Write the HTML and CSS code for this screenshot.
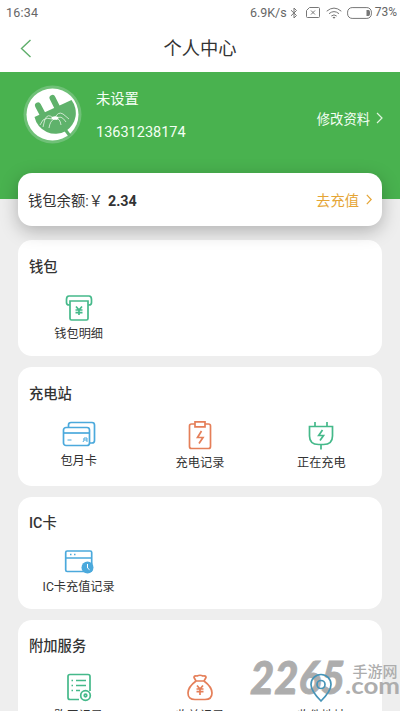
FILE: index.html
```html
<!DOCTYPE html>
<html lang="zh-CN">
<head>
<meta charset="utf-8">
<meta name="viewport" content="width=device-width, initial-scale=1">
<title>个人中心</title>
<link rel="stylesheet" href="styles.css">
</head>
<body>
<div class="screen">
  <div class="status">
    <span class="time">16:34</span>
    <span class="speed">6.9K/s</span>
    <svg class="bt" width="8" height="12" viewBox="0 0 8 12"><path d="M1 3.2 6.5 8.5 4 11V1l2.500 2.500L1 8.800"/></svg>
    <svg class="sim" width="14" height="11" viewBox="0 0 14 11"><path d="M3.500.500h9q1 0 1 1v8q0 1-1 1h-11q-1 0-1-1v-6zM5 3.500l4 4M9 3.500l-4 4"/></svg>
    <svg class="wifi" width="16" height="12" viewBox="0 0 16 12"><path d="M.7 4.200Q8-2 15.300 4.200M3 6.700q5-4.200 10 0M5.300 9q2.700-2.200 5.400 0"/><path class="dot" d="M6.500 10.200q1.500-1 3 0L8 11.800z"/></svg>
    <svg class="batt" width="25" height="12" viewBox="0 0 25 12"><rect x=".6" y=".6" width="23.800" height="10.800" rx="4.500"/><path class="dot" d="M19.500 3h2q1.500 0 1.500 3t-1.500 3h-2z"/></svg>
    <span class="pct">73%</span>
  </div>
  <header class="nav">
    <svg class="back" width="12" height="19" viewBox="0 0 12 19"><path d="M10.500 1 1.500 9.500l9 8.500"/></svg>
    <h1>个人中心</h1>
  </header>
  <section class="profile">
    <svg class="avatar" width="60" height="60" viewBox="0 0 60 60">
      <circle cx="29.500" cy="29.500" r="29" fill="#6fc077"/>
      <circle cx="29.500" cy="29.500" r="26" fill="#fff"/>
      <path d="M11.500 32 48.500 15A21.500 21.500 0 0 1 43 46 21.500 21.500 0 0 1 11.500 32z" fill="#5fb26b"/>
      <path d="m20 30-5-9.500M34.500 23 29.500 13" stroke="#5fb26b" stroke-width="6" stroke-linecap="round"/>
      <path d="m41 43 6 8" stroke="#5fb26b" stroke-width="3"/>
      <g fill="none" stroke="#e4f3e5" stroke-width=".8"><path d="M30 33q-5-5-8 1l-2 8M29 34q-5-2-9 1l-3 5M31 34q-4 2-5 9M32 33q3-7 8-4l6 5M33 34q5-5 10 3M33 34q4-1 5 6"/></g>
      <ellipse cx="32" cy="33" rx="3.500" ry="1.800" fill="#fff"/>
    </svg>
    <div class="who"><div class="name">未设置</div><div class="phone">13631238174</div></div>
    <div class="edit">修改资料<svg width="7" height="12" viewBox="0 0 7 12"><path d="m1 1 5 5-5 5"/></svg></div>
  </section>
  <main>
    <section class="balance">
      <div>钱包余额:￥<b>2.34</b></div>
      <div class="topup">去充值<svg width="6" height="11" viewBox="0 0 6 11"><path d="m.8.800 4.400 4.700-4.400 4.700"/></svg></div>
    </section>
    <section class="card wallet">
      <h2>钱包</h2>
      <div class="grid">
        <div class="item"><svg class="green" width="28" height="28" viewBox="0 0 28 28"><path d="M5 11H4q-2.500 0-2.500-2.500v-3Q1.500 2 4 2h20q2.500 0 2.500 3.500v3Q26.500 11 24 11h-1M5 7h18v17.500q0 1.500-1.500 1.500h-15Q5 26 5 24.500zM11 12.500l3 3.500 3-3.500M10.500 16h7M10.500 18.700h7M14 16v5"/></svg><span>钱包明细</span></div>
      </div>
    </section>
    <section class="card station">
      <h2>充电站</h2>
      <div class="grid">
        <div class="item"><svg class="blue" width="34" height="27" viewBox="0 0 34 27"><path d="M6.500 6V4Q6.500 1.500 9 1.500h21q2.500 0 2.500 2.500v15.500q0 2.500-2.500 2.500h-2.500"/><rect x="1.500" y="6.500" width="26" height="18" rx="2.500"/><path d="M1.500 12h26"/><path class="thin" d="M5.500 19h4M21 21q1-1 1-4h3v4M22 19h3"/></svg><span>包月卡</span></div>
        <div class="item"><svg class="orange" width="28" height="29" viewBox="0 0 28 29"><path d="M9 3H5.500Q3.500 3 3.500 5v20.500q0 2 2 2h17q2 0 2-2V5q0-2-2-2H19M9 .8h10v5H9zM15.500 10l-4 6.500h5.500L13 22.500"/></svg><span>充电记录</span></div>
        <div class="item"><svg class="green" width="28" height="29" viewBox="0 0 28 29"><path d="M2.500 5.500h23V15q0 8.500-9 8.500h-5q-9 0-9-8.500zM8 1v4.500M20 1v4.500M14 23.500v5M15.500 9l-3.800 5.500h4.800L13 19.500"/></svg><span>正在充电</span></div>
      </div>
    </section>
    <section class="card ic">
      <h2>IC卡</h2>
      <div class="grid">
        <div class="item"><svg class="blue" width="30" height="25" viewBox="0 0 30 25"><rect x="1.700" y="1" width="26" height="20.500" rx="1.500"/><path d="M1.700 8h26M6 4.500h1.500M10 4.500h1.500"/><circle class="clock" cx="23.500" cy="17.500" r="6"/><path class="hand" d="M23.500 14v4l2 1.700"/></svg><span>IC卡充值记录</span></div>
      </div>
    </section>
    <section class="card extra">
      <h2>附加服务</h2>
      <div class="grid">
        <div class="item"><svg class="green" width="28" height="30" viewBox="0 0 28 30"><path d="M14 26.500H5q-2 0-2-2v-21q0-2 2-2h18q2 0 2 2V18M11 7.500h10M11 12.500h10M11 17.500h4M6.500 7.500H8M6.500 12.500H8M6.500 17.500H8"/><circle cx="20.500" cy="22.500" r="4.800"/><circle cx="20.500" cy="22.500" r="1.300"/></svg><span>购买记录</span></div>
        <div class="item"><svg class="orange" width="28" height="30" viewBox="0 0 28 30"><path d="M10 8 8 4.500Q8 2.500 11 3q3-1.500 6 0 3-.500 3 1.500L18 8M10 8h8q8 6 8 12 0 6.500-7 6.500H9Q2 26.500 2 20q0-6 8-12zM11 12.500l3 3.500 3-3.500M10.500 16h7M10.500 18.700h7M14 16v6"/></svg><span>收益记录</span></div>
        <div class="item pin"><svg width="28" height="30" viewBox="0 0 28 30"><path d="M14 28Q4 18 4 11.500a10 10 0 0 1 20 0Q24 18 14 28z"/><circle cx="14" cy="11.500" r="4"/></svg><span>收件地址</span></div>
      </div>
    </section>
  </main>
  <svg class="mark" width="152" height="40" viewBox="0 0 152 40">
    <text class="big" x="1" y="34" textLength="95" lengthAdjust="spacingAndGlyphs">2265</text>
    <text class="cn" x="103.500" y="17" textLength="45" lengthAdjust="spacingAndGlyphs">手游网</text>
    <text class="com" x="96" y="34" textLength="55" lengthAdjust="spacingAndGlyphs">.com</text>
  </svg>
</div>
</body>
</html>
```
FILE: styles.css
```css
* { box-sizing: border-box; }
body { margin: 0; background: #eee; color: #333; font-family: Roboto, "Noto Sans CJK SC", sans-serif; }
h1, h2 { margin: 0; }
svg { display: block; flex: none; fill: none; }
.screen { position: relative; height: 711px; overflow: hidden; }

.status { display: flex; align-items: center; height: 25px; padding: 0 3px 0 6px; background: #fff; color: #666; font-size: 12.500px; line-height: 25px; }
.status svg { stroke: #777; stroke-width: 1; }
.status .dot { fill: #777; stroke: none; }
.time { letter-spacing: .2px; }
.speed { margin-left: auto; }
.bt { margin-left: 3px; }
.sim { margin-left: 8px; }
.wifi { margin-left: 6px; }
.batt { margin-left: 5px; }
.pct { margin-left: 3px; font-size: 12px; }

.nav { display: flex; align-items: center; height: 47px; padding: 0 20px; background: #fff; }
.nav h1 { flex: 1; margin-right: 12px; font-size: 18.300px; font-weight: 400; line-height: 49px; text-align: center; }
.back { stroke: #5fae6b; stroke-width: 1.400; }

.profile { display: flex; height: 127px; padding: 13px 17px 0 23px; background: #49b24f; color: #f4fff4; }
.who { margin: 4px 0 0 13px; }
.name { font-size: 14.300px; line-height: 20px; }
.phone { margin-top: 14px; font-size: 14.500px; line-height: 20px; }
.edit { display: flex; align-items: center; gap: 6px; height: 20px; margin: 23px 0 0 auto; font-size: 13.300px; }
.edit svg { stroke: #dff5df; stroke-width: 1.200; }

main { padding: 0 18px; margin-top: -26px; }
.balance { display: flex; align-items: center; justify-content: space-between; height: 53px; padding: 0 10px; border-radius: 14px; background: #fff; box-shadow: 0 5px 18px rgba(0, 0, 0, .26); font-size: 14.300px; position: relative; }
.balance b { margin-left: 5px; font-weight: 700; }
.topup { display: flex; align-items: center; gap: 7px; color: #e5a535; }
.topup svg { stroke: #e5a535; stroke-width: 1.200; }

.card { border-radius: 14px; background: #fff; margin-bottom: 11px; padding-top: 17px; }
.card h2 { padding-left: 11px; font-size: 14.300px; font-weight: 500; line-height: 20px; }
.wallet { height: 116px; margin-top: 14px; }
.station { height: 119px; }
.ic { height: 112px; padding-top: 16px; }
.extra { height: 130px; padding-top: 16px; }
.grid { display: grid; grid-template-columns: repeat(3, 1fr); margin-top: 17px; }
.item { display: flex; flex-direction: column; align-items: center; font-size: 12.200px; line-height: 18px; }
.item svg { stroke-width: 1.700; }
.item span { margin-top: 3px; }
.station .item span { margin-top: 4px; }
.extra .item span { margin-top: 4px; }
.green { stroke: #45b98a; }
.blue { stroke: #4ba9dc; }
.orange { stroke: #e57f59; }
.item .thin { stroke-width: 1; }
.clock { fill: #4ba9dc; stroke: none; }
.hand { stroke: #fff; stroke-width: 1; }
.pin { position: relative; z-index: 2; }
.pin svg { stroke: #4594b8; }

.mark { position: absolute; left: 249px; top: 660px; fill: #adadad; font-weight: 900; z-index: 1; }
.big { font-family: Lato, sans-serif; font-size: 45px; font-style: italic; stroke: #adadad; stroke-width: .8; }
.cn { font-family: "Noto Sans CJK SC", sans-serif; font-size: 15px; font-weight: 500; }
.com { font-family: Lato, sans-serif; font-size: 22px; font-weight: 700; }
```
